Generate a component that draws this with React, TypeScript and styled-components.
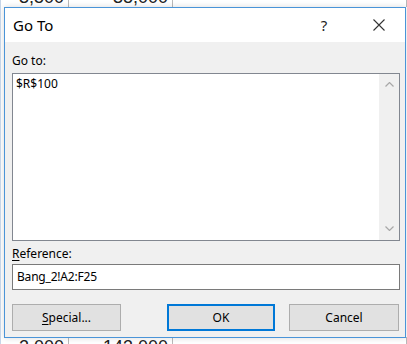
import React from "react";
import styled, { createGlobalStyle } from "styled-components";

const Global = createGlobalStyle`
  html, body { margin: 0; padding: 0; background: #ffffff; }
  body { width: 407px; height: 344px; overflow: hidden; }
  * { box-sizing: border-box; }
`;

const Sheet = styled.div`
  position: relative;
  width: 407px;
  height: 344px;
  background: #ffffff;
  display: flex;
  flex-direction: column;
  justify-content: space-between;
  overflow: hidden;
  border-left: 1px solid #c6d5e8;
`;

const Strip = styled.div<{ $align: "top" | "bottom" }>`
  height: 7px;
  overflow: hidden;
  display: flex;
  flex-direction: column;
  justify-content: ${(p) => (p.$align === "top" ? "flex-end" : "flex-start")};
`;

const SheetRow = styled.div`
  flex: none;
  height: 24px;
  display: grid;
  grid-template-columns: 68px 104px 1fr;
  font-family: "Liberation Sans", Arial, sans-serif;
  font-size: 18px;
  color: #222;
`;

const SheetCell = styled.div<{ $valign: "top" | "bottom" }>`
  border-right: 1px solid #b9b9b9;
  display: flex;
  justify-content: flex-end;
  align-items: ${(p) => (p.$valign === "top" ? "flex-start" : "flex-end")};
  padding: 0 4px;
  line-height: 18px;
  ${(p) => (p.$valign === "bottom" ? "padding-bottom: 1px;" : "padding-top: 1px;")}
`;

const Dialog = styled.div`
  position: absolute;
  left: 3px;
  top: 7px;
  width: 402px;
  height: 331px;
  border: 1px solid #4a94d8;
  background: #f0f0f0;
  display: flex;
  flex-direction: column;
  box-shadow: 0 0 6px rgba(0, 0, 0, 0.15);
  font-family: "Segoe UI", "Noto Sans", "Open Sans", sans-serif;
  color: #000;
`;

const TitleBar = styled.div`
  height: 34px;
  flex: none;
  background: #ffffff;
  display: flex;
  align-items: center;
  padding-left: 8px;
`;

const Title = styled.div`
  flex: 1;
  font-size: 15px;
  line-height: 20px;
`;

const HelpGlyph = styled.div`
  width: 20px;
  font-size: 15px;
  line-height: 20px;
  text-align: center;
  color: #222;
  margin-right: 39px;
`;

const CloseBtn = styled.div`
  width: 12px;
  height: 12px;
  margin-right: 20px;
  display: flex;
`;

const Body = styled.div`
  flex: 1;
  display: flex;
  flex-direction: column;
  padding: 11px 5px 0 7px;
`;

const Label = styled.div<{ $gap?: number }>`
  font-size: 12px;
  line-height: 16px;
  margin-top: ${(p) => p.$gap ?? 0}px;
  span { text-decoration: underline; text-underline-offset: 2px; }
`;

const ListBox = styled.div`
  margin-top: 4px;
  height: 168px;
  border: 1px solid #828790;
  background: #ffffff;
  display: flex;
`;

const ListItems = styled.div`
  flex: 1;
  padding: 2px 3px;
  font-size: 12px;
  line-height: 16px;
`;

const ScrollBar = styled.div`
  width: 20px;
  background: #f0f0f0;
  display: flex;
  flex-direction: column;
  justify-content: space-between;
  align-items: center;
  padding: 8px 0 9px;
`;

const Input = styled.div`
  margin-top: 2px;
  height: 26px;
  border: 1px solid #7a7a7a;
  background: #ffffff;
  padding: 4px 4px;
  font-size: 12px;
  line-height: 16px;
  letter-spacing: -0.2px;
`;

const ButtonRow = styled.div`
  margin-top: 14px;
  display: flex;
  justify-content: space-between;
  padding-right: 1px;
`;

const ButtonGroup = styled.div`
  display: flex;
  gap: 14px;
`;

const Button = styled.div<{ $default?: boolean; $w: number }>`
  width: ${(p) => p.$w}px;
  height: 27px;
  background: #e1e1e1;
  border: ${(p) => (p.$default ? "2px solid #0078d7" : "1px solid #adadad")};
  display: flex;
  align-items: center;
  justify-content: center;
  font-size: 12px;
  line-height: 16px;
  span { text-decoration: underline; text-underline-offset: 2px; }
`;

const Chevron = ({ up }: { up?: boolean }) => (
  <svg width="9" height="5" viewBox="0 0 9 5">
    <polyline
      points={up ? "0.5,4.5 4.5,0.5 8.5,4.5" : "0.5,0.5 4.5,4.5 8.5,0.5"}
      fill="none"
      stroke="#a8a8a8"
      strokeWidth="1.2"
    />
  </svg>
);

export default function App() {
  return (
    <>
      <Global />
      <Sheet>
        <Strip $align="top">
          <SheetRow>
            <SheetCell $valign="bottom">3,500</SheetCell>
            <SheetCell $valign="bottom">38,000</SheetCell>
            <SheetCell $valign="bottom" />
          </SheetRow>
        </Strip>
        <Strip $align="bottom">
          <SheetRow>
            <SheetCell $valign="top">2,000</SheetCell>
            <SheetCell $valign="top">143,000</SheetCell>
            <SheetCell $valign="top" />
          </SheetRow>
        </Strip>
        <Dialog>
          <TitleBar>
            <Title>Go To</Title>
            <HelpGlyph>?</HelpGlyph>
            <CloseBtn>
              <svg width="12" height="12" viewBox="0 0 12 12">
                <path d="M0.5 0.5 L11.5 11.5 M11.5 0.5 L0.5 11.5" stroke="#333" strokeWidth="1.1" />
              </svg>
            </CloseBtn>
          </TitleBar>
          <Body>
            <Label>Go to:</Label>
            <ListBox>
              <ListItems>$R$100</ListItems>
              <ScrollBar>
                <Chevron up />
                <Chevron />
              </ScrollBar>
            </ListBox>
            <Label $gap={5}>
              <span>R</span>eference:
            </Label>
            <Input>Bang_2!A2:F25</Input>
            <ButtonRow>
              <Button $w={109}>
                <span>S</span>pecial...
              </Button>
              <ButtonGroup>
                <Button $w={108} $default>
                  OK
                </Button>
                <Button $w={110}>Cancel</Button>
              </ButtonGroup>
            </ButtonRow>
          </Body>
        </Dialog>
      </Sheet>
    </>
  );
}
